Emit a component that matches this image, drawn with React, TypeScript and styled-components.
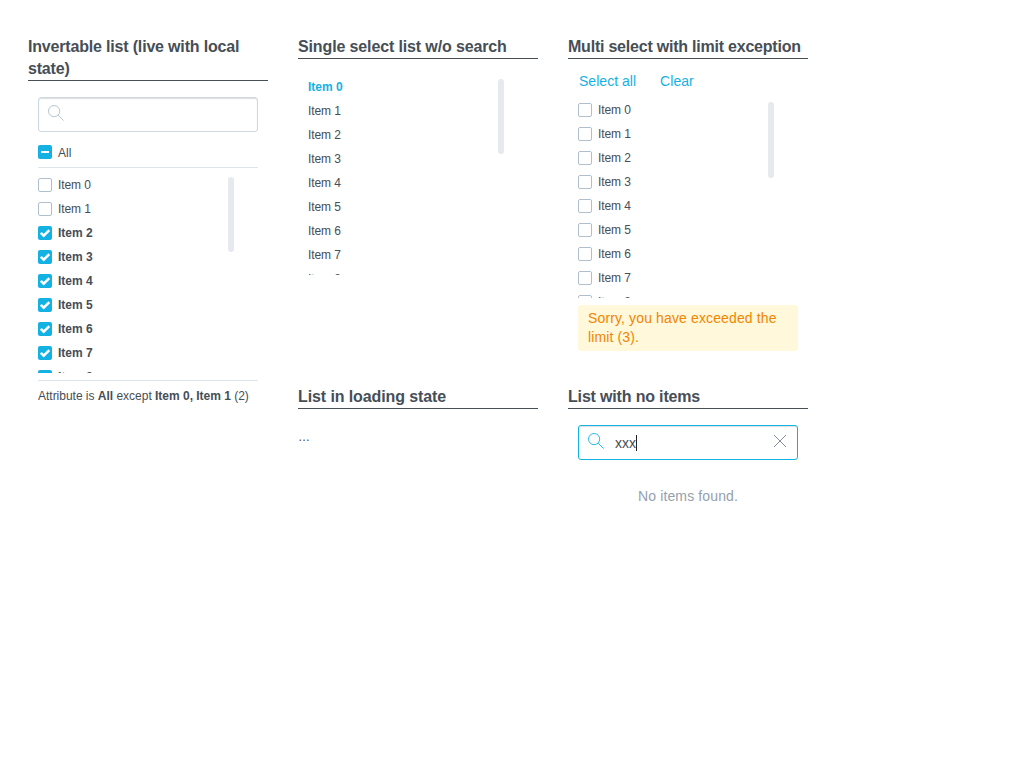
import React from "react";
import styled, { createGlobalStyle } from "styled-components";

const GlobalStyle = createGlobalStyle`
  * { box-sizing: border-box; }
  body {
    margin: 0;
    background: #fff;
    color: #464e56;
    font: 12px/18px "Liberation Sans", Arial, sans-serif;
  }
`;

const Page = styled.main`
  display: grid;
  grid-template-columns: repeat(3, 240px);
  grid-template-rows: 350px auto;
  column-gap: 30px;
  padding: 36px 28px;
`;

const Panel = styled.section<{ $tall?: boolean }>`
  grid-row: ${(p) => (p.$tall ? "span 2" : "auto")};
`;

const Title = styled.h4<{ $tracking: number }>`
  margin: 0;
  border-bottom: 1px solid #464e56;
  font-size: 16px;
  line-height: 22px;
  letter-spacing: ${(p) => p.$tracking}px;
`;

const Body = styled.div<{ $top: number }>`
  padding: ${(p) => p.$top}px 10px 0;
`;

const SearchField = styled.div<{ $active?: boolean }>`
  display: flex;
  align-items: flex-start;
  height: 35px;
  padding: 6px 10px 0 8px;
  border: 1px solid ${(p) => (p.$active ? "#14b2e2" : "#ccd8e2")};
  border-radius: 3px;
  box-shadow: inset 0 1px 1px rgba(31, 32, 34, 0.15);
  color: ${(p) => (p.$active ? "#14b2e2" : "#b0beca")};
  svg { flex: none; }
`;

const Query = styled.span`
  flex: 1;
  margin-left: 10px;
  padding-top: 2px;
  color: #464e56;
  font-size: 14px;
  line-height: 18px;
`;

const Caret = styled.i`
  display: inline-block;
  width: 1px;
  height: 16px;
  vertical-align: -3px;
  background: #222;
`;

const AllRow = styled.div`
  display: flex;
  align-items: center;
  height: 36px;
  padding-top: 5px;
  border-bottom: 1px solid #dde4eb;
`;

const AllLabel = styled.span`
  padding-top: 2px;
`;

const ListArea = styled.div`
  display: flex;
  justify-content: space-between;
  height: 200px;
  padding-right: 24px;
  overflow: hidden;
`;

const Items = styled.ul`
  margin: 0;
  padding: 0;
  list-style: none;
`;

const Item = styled.li<{ $bold?: boolean; $accent?: boolean }>`
  display: flex;
  align-items: center;
  height: 24px;
  font-weight: ${(p) => (p.$bold ? 700 : 400)};
  letter-spacing: ${(p) => (p.$bold ? 0 : -0.1)}px;
  color: ${(p) => (p.$accent ? "#14b2e2" : "inherit")};
`;

const ScrollThumb = styled.div<{ $height: number }>`
  width: 6px;
  height: ${(p) => p.$height}px;
  margin-top: 4px;
  border-radius: 3px;
  background: #e6eaee;
`;

const Box = styled.span<{ $filled: boolean }>`
  display: flex;
  width: 14px;
  height: 14px;
  margin-right: 6px;
  border-radius: 2px;
  border: ${(p) => (p.$filled ? "0" : "1px solid #b0bfd0")};
  background: ${(p) => (p.$filled ? "#14b2e2" : "#fff")};
`;

const Summary = styled.div`
  margin-top: 7px;
  padding-top: 6px;
  border-top: 1px solid #dde4eb;
  white-space: nowrap;
  letter-spacing: -0.015px;
`;

const Actions = styled.div`
  display: flex;
  gap: 24px;
  height: 26px;
  padding-left: 1px;
`;

const Action = styled.a`
  color: #14b2e2;
  font-size: 14px;
  line-height: 18px;
  letter-spacing: 0.03px;
`;

const Warning = styled.div`
  height: 46px;
  margin-top: 7px;
  padding: 4px 10px;
  border-radius: 3px;
  background: #fff8db;
  color: #f18600;
  font-size: 14px;
  line-height: 19px;
  letter-spacing: 0.13px;
`;

const Loading = styled.div`
  padding-top: 19px;
`;

const NoItems = styled.div`
  margin-top: 27px;
  text-align: center;
  color: #94a1ad;
  font-size: 14px;
  line-height: 18px;
  letter-spacing: 0.13px;
`;

type Mark = "none" | "check" | "dash";

function Checkbox({ mark }: { mark: Mark }) {
  return (
    <Box $filled={mark !== "none"}>
      {mark !== "none" && (
        <svg width="14" height="14" viewBox="0 0 14 14" fill="none" stroke="#fff">
          {mark === "check" ? (
            <path d="M2.8 6.9 5.7 9.7 11.3 4.1" strokeWidth="2.5" />
          ) : (
            <path d="M3 7H11" strokeWidth="2" />
          )}
        </svg>
      )}
    </Box>
  );
}

function SearchIcon() {
  return (
    <svg width="18" height="18" viewBox="0 0 18 18" fill="none" stroke="currentColor" strokeWidth="0.9">
      <circle cx="7.1" cy="7.1" r="5.6" />
      <path d="M11.1 11.1 16.6 16.6" />
    </svg>
  );
}

function ClearIcon() {
  return (
    <svg width="14" height="18" viewBox="0 0 14 18" fill="none" stroke="#878c9c">
      <path d="M1 3 13 15M13 3 1 15" />
    </svg>
  );
}

const names = Array.from({ length: 9 }, (_, i) => `Item ${i}`);

function List({ kind }: { kind: "inverted" | "single" | "multi" }) {
  return (
    <ListArea>
      <Items>
        {names.map((name, i) => {
          const selected = kind === "inverted" ? i > 1 : kind === "single" && i === 0;
          return (
            <Item key={name} $bold={selected} $accent={kind === "single" && selected}>
              {kind !== "single" && <Checkbox mark={selected ? "check" : "none"} />}
              {name}
            </Item>
          );
        })}
      </Items>
      <ScrollThumb $height={kind === "multi" ? 76 : 75} />
    </ListArea>
  );
}

const InvertedArea = styled.div`
  padding-top: 5px;
`;

export default function App() {
  return (
    <>
      <GlobalStyle />
      <Page>
        <Panel $tall>
          <Title $tracking={-0.18}>Invertable list (live with local state)</Title>
          <Body $top={16}>
            <SearchField><SearchIcon /></SearchField>
            <AllRow><Checkbox mark="dash" /><AllLabel>All</AllLabel></AllRow>
            <InvertedArea><List kind="inverted" /></InvertedArea>
            <Summary>
              Attribute is <b>All</b> except <b>Item 0, Item 1</b> (2)
            </Summary>
          </Body>
        </Panel>
        <Panel>
          <Title $tracking={-0.13}>Single select list w/o search</Title>
          <Body $top={16}><List kind="single" /></Body>
        </Panel>
        <Panel>
          <Title $tracking={-0.22}>Multi select with limit exception</Title>
          <Body $top={13}>
            <Actions><Action>Select all</Action><Action>Clear</Action></Actions>
            <List kind="multi" />
            <Warning>Sorry, you have exceeded the limit (3).</Warning>
          </Body>
        </Panel>
        <Panel>
          <Title $tracking={-0.1}>List in loading state</Title>
          <Loading>…</Loading>
        </Panel>
        <Panel>
          <Title $tracking={-0.17}>List with no items</Title>
          <Body $top={16}>
            <SearchField $active>
              <SearchIcon />
              <Query>xxx<Caret /></Query>
              <ClearIcon />
            </SearchField>
            <NoItems>No items found.</NoItems>
          </Body>
        </Panel>
      </Page>
    </>
  );
}
